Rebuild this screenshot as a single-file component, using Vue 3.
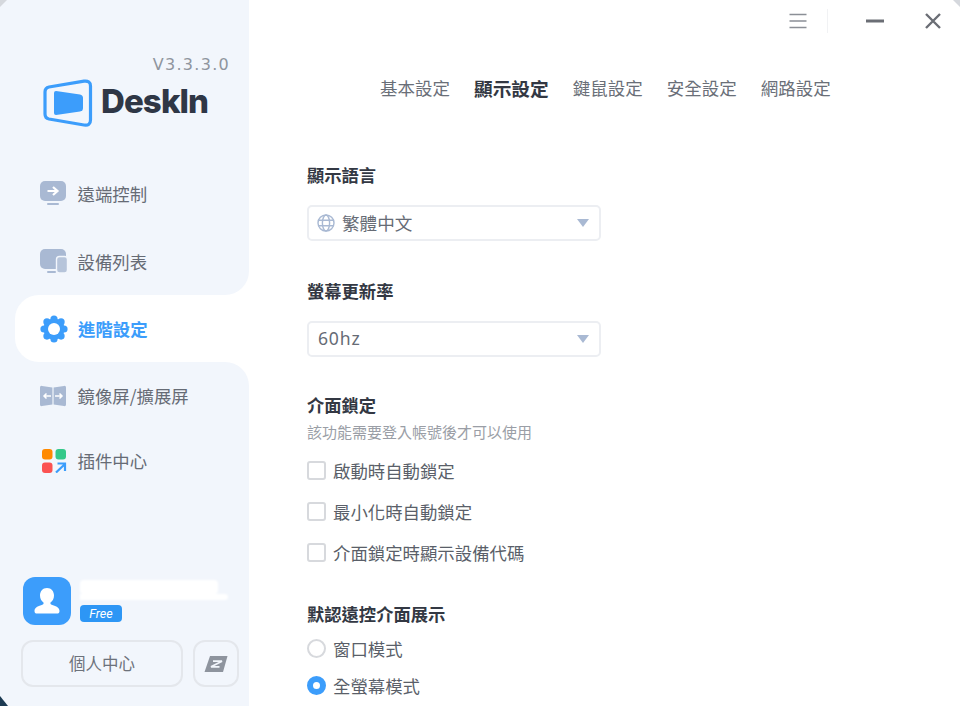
<template>
  <div class="window">
    <aside class="sidebar">
      <div class="side-top">
        <div class="version">V3.3.3.0</div>
        <div class="logo">
          <svg width="52" height="48" viewBox="0 0 52 48">
            <path d="M8 8 L43 2.2 Q49.5 1.5 49.5 7 V41 Q49.5 47 43 46 L8 40 Q4 39.2 4 35 V13 Q4 8.8 8 8 Z" fill="none" stroke="#3c9dfb" stroke-width="3.2" />
            <path d="M15 12 L39 15.5 Q42 16 42 19 V29 Q42 32 39 32.5 L15 36 Q13 36 13 34 V14 Q13 12 15 12 Z" fill="#3c9dfb" />
          </svg>
          <span class="logo-text">DeskIn</span>
        </div>
        <nav class="nav nav-first">
          <div class="nav-item">
            <svg width="28" height="24" viewBox="0 0 28 24">
              <rect x="1" y="0" width="26" height="20" rx="5" fill="#a9b9d3" />
              <rect x="8" y="22" width="12" height="2" rx="1" fill="#a9b9d3" />
              <path d="M8.5 10 H18 M14 6 L18.5 10 L14 14" fill="none" stroke="#fff" stroke-width="2.2" />
            </svg>
            <span>遠端控制</span>
          </div>
          <div class="nav-item">
            <svg width="28" height="24" viewBox="0 0 28 24">
              <rect x="1" y="0" width="26" height="20" rx="5" fill="#a9b9d3" />
              <rect x="8" y="22" width="9" height="2" rx="1" fill="#a9b9d3" />
              <rect x="17.5" y="7.5" width="11" height="16.5" rx="3" fill="#b6c4da" stroke="#f2f6fc" stroke-width="1.4" />
            </svg>
            <span>設備列表</span>
          </div>
        </nav>
      </div>
      <div class="side-mid">
        <div class="nav-item active">
          <svg width="28" height="28" viewBox="0 0 28 28">
            <circle cx="14" cy="14" r="10.5" fill="#3c9dfb" />
            <circle v-for="(t, i) in teeth" :key="i" :cx="t.x" :cy="t.y" r="3.6" fill="#3c9dfb" />
            <circle cx="14" cy="14" r="6" fill="#fff" />
          </svg>
          <span>進階設定</span>
        </div>
      </div>
      <div class="side-bottom">
        <nav class="nav nav-second">
          <div class="nav-item">
            <svg width="28" height="24" viewBox="0 0 28 24">
              <path d="M1 3.5 Q1 1.5 3 1.9 L13.4 3.5 V20.5 L3 22.1 Q1 22.5 1 20.5 Z M14.6 3.5 L25 1.9 Q27 1.5 27 3.5 V20.5 Q27 22.5 25 22.1 L14.6 20.5 Z" fill="#a9b9d3" />
              <path d="M5 12 H12 M7.5 9.5 L5 12 L7.5 14.5 M16 12 H23 M20.5 9.5 L23 12 L20.5 14.5" fill="none" stroke="#fff" stroke-width="1.5" />
            </svg>
            <span>鏡像屏/擴展屏</span>
          </div>
          <div class="nav-item">
            <svg width="28" height="24" viewBox="0 0 28 24">
              <rect x="3" y="0" width="10.5" height="10.5" rx="3" fill="#ff8a00" />
              <rect x="16.5" y="0" width="10.5" height="10.5" rx="3" fill="#35c98a" />
              <rect x="3" y="13.5" width="10.5" height="10.5" rx="3" fill="#fb5252" />
              <path d="M17 23.5 L26 15 M18.5 14.5 H26 V22" fill="none" stroke="#3c9dfb" stroke-width="2.2" />
            </svg>
            <span>插件中心</span>
          </div>
        </nav>
        <div class="user">
          <div class="avatar">
            <svg width="26" height="28" viewBox="0 0 26 28">
              <path d="M13 1 C17.5 1 20 4.5 20 8.5 C20 12 18.5 14 16.5 15.5 C16 17 17 17.5 19 18.2 C23 19.5 25.5 21 25.5 24 C25.5 26 24.5 26.5 23 26.5 H3 C1.5 26.5 0.5 26 0.5 24 C0.5 21 3 19.5 7 18.2 C9 17.5 10 17 9.5 15.5 C7.5 14 6 12 6 8.5 C6 4.5 8.5 1 13 1 Z" fill="#fff" />
            </svg>
          </div>
          <div class="user-info">
            <div class="redact">
              <div class="redact-a"></div>
              <div class="redact-b"></div>
            </div>
            <div class="badge">Free</div>
          </div>
        </div>
        <div class="user-actions">
          <div class="btn-center">個人中心</div>
          <div class="btn-small">
            <svg width="24" height="18" viewBox="0 0 24 18">
              <path d="M6 1 H23.5 L19 17 H0.5 Z" fill="#8e949e" />
              <path d="M9 6.2 H18 L7 11.8 H15.5" fill="none" stroke="#f2f6fc" stroke-width="1.7" />
            </svg>
          </div>
        </div>
      </div>
    </aside>

    <main class="main">
      <div class="titlebar">
        <svg class="menu-icon" width="18" height="16" viewBox="0 0 18 16">
          <path d="M0.5 1.5 H17.5 M0.5 8 H17.5 M0.5 14.5 H17.5" stroke="#8b8f96" stroke-width="1.6" />
        </svg>
        <div class="divider"></div>
        <svg class="min-icon" width="18" height="4" viewBox="0 0 18 4">
          <path d="M0 2 H18" stroke="#6b6e75" stroke-width="3" />
        </svg>
        <svg class="close-icon" width="16" height="16" viewBox="0 0 16 16">
          <path d="M1 1 L15 15 M15 1 L1 15" stroke="#6b6e75" stroke-width="2.4" />
        </svg>
      </div>

      <div class="tabs">
        <span v-for="t in tabs" :key="t" class="tab" :class="{ on: t === '顯示設定' }">{{ t }}</span>
      </div>

      <section class="group group-first">
        <h3>顯示語言</h3>
        <div class="select">
          <svg width="18" height="18" viewBox="0 0 18 18" fill="none" stroke="#a9b9d3" stroke-width="1.4">
            <circle cx="9" cy="9" r="8" />
            <ellipse cx="9" cy="9" rx="3.6" ry="8" />
            <path d="M1.5 6.3 H16.5 M1.5 11.7 H16.5" />
          </svg>
          <span class="select-text">繁體中文</span>
          <i class="caret"></i>
        </div>
      </section>

      <section class="group group-rate">
        <h3>螢幕更新率</h3>
        <div class="select">
          <span class="select-text hz">60hz</span>
          <i class="caret"></i>
        </div>
      </section>

      <section class="group group-lock">
        <h3>介面鎖定</h3>
        <p class="hint">該功能需要登入帳號後才可以使用</p>
        <label v-for="c in checks" :key="c" class="check"><i class="box"></i>{{ c }}</label>
      </section>

      <section class="group group-mode">
        <h3>默認遠控介面展示</h3>
        <label class="radio first"><i class="dot"></i>窗口模式</label>
        <label class="radio"><i class="dot sel"></i>全螢幕模式</label>
      </section>
    </main>

    <i class="corner corner-tl"></i>
    <i class="corner corner-tr"></i>
    <i class="corner corner-bl"></i>
  </div>
</template>

<script setup>
const tabs = ['基本設定', '顯示設定', '鍵鼠設定', '安全設定', '網路設定']
const checks = ['啟動時自動鎖定', '最小化時自動鎖定', '介面鎖定時顯示設備代碼']

// 8 lobes round the cog
const teeth = Array.from({ length: 8 }, (_, i) => {
  const a = (i * Math.PI) / 4
  return { x: 14 + 10 * Math.cos(a), y: 14 + 10 * Math.sin(a) }
})
</script>

<style scoped>
.window {
  position: relative;
  display: flex;
  width: 960px;
  height: 706px;
  overflow: hidden;
  background: #fff;
  font-family: "Noto Sans CJK TC", "Noto Sans", sans-serif;
  color: #5a5f69;
}

.sidebar {
  display: flex;
  flex-direction: column;
  flex: none;
  width: 249px;
  height: 706px;
}

.side-top {
  height: 295px;
  box-sizing: border-box;
  padding-top: 54px;
  background: #f2f6fc;
  border-bottom-right-radius: 24px;
}

.version {
  padding-right: 19px;
  text-align: right;
  font-family: "DejaVu Sans", sans-serif;
  font-size: 16px;
  line-height: 22px;
  letter-spacing: 1.3px;
  color: #8f959e;
}

.logo {
  display: flex;
  align-items: center;
  gap: 8px;
  margin-top: 3px;
  padding-left: 41px;
  height: 48px;
}

.logo-text {
  margin-top: -4px;
  font-family: Inter, sans-serif;
  font-weight: 800;
  font-size: 33px;
  letter-spacing: -0.9px;
  color: #2f3746;
}

.nav-first {
  margin-top: 32px;
}

.nav-item {
  display: flex;
  align-items: center;
  gap: 10.5px;
  height: 68px;
  padding-left: 39px;
  font-size: 17.4px;
  color: #666b75;
}

.side-mid {
  height: 67px;
  background: #f2f6fc;
}

.nav-item.active {
  gap: 10px;
  height: 67px;
  margin-left: 15px;
  padding-left: 25px;
  background: #fff;
  border-radius: 24px 0 0 24px;
  font-weight: 700;
  color: #3c9dfb;
}

.side-bottom {
  flex: 1;
  background: #f2f6fc;
  border-top-right-radius: 24px;
}

.nav-second {
  padding-top: 1px;
}

.nav-second .nav-item {
  height: 65px;
}

.user {
  display: flex;
  gap: 9px;
  margin-top: 84px;
  padding-left: 23px;
}

.avatar {
  display: flex;
  align-items: center;
  justify-content: center;
  width: 48px;
  height: 48px;
  border-radius: 12px;
  background: #3c9dfb;
}

.redact {
  width: 148px;
  height: 20px;
  margin-top: 3px;
  filter: blur(1px);
}

.redact-a {
  width: 138px;
  height: 14px;
  background: #fff;
  border-radius: 4px;
}

.redact-b {
  width: 148px;
  height: 6px;
  background: #fff;
  border-radius: 0 4px 4px 0;
}

.badge {
  width: 42px;
  height: 17px;
  margin-top: 5px;
  border-radius: 4px;
  background: #2d96f5;
  color: #fff;
  text-align: center;
  font-family: Roboto, sans-serif;
  font-style: italic;
  font-size: 12.5px;
  line-height: 17px;
}

.user-actions {
  display: flex;
  gap: 10px;
  margin-top: 15px;
  padding-left: 21px;
}

.btn-center,
.btn-small {
  display: flex;
  align-items: center;
  justify-content: center;
  box-sizing: border-box;
  height: 47px;
  border: 2px solid #e4e7ec;
  border-radius: 12px;
}

.btn-center {
  width: 162px;
  padding-bottom: 2px;
  font-size: 16.5px;
  color: #6d727b;
}

.btn-small {
  width: 46px;
}

.main {
  flex: 1;
  padding-left: 58px;
  min-width: 0;
}

.titlebar {
  display: flex;
  align-items: center;
  height: 42px;
  margin-left: -58px;
}

.menu-icon {
  margin-left: 540px;
}

.divider {
  width: 1px;
  height: 24px;
  margin-left: 20px;
  background: #f1f2f4;
}

.min-icon {
  margin-left: 38px;
}

.close-icon {
  margin-left: 41px;
}

.tabs {
  display: flex;
  align-items: center;
  gap: 24px;
  height: 26px;
  margin-top: 32px;
  margin-left: 73px;
}

.tab {
  font-size: 17.5px;
  color: #6a6f78;
  white-space: nowrap;
}

.tab.on {
  font-size: 18.7px;
  font-weight: 700;
  color: #333843;
}

h3 {
  margin: 0;
  font-size: 17.3px;
  line-height: 26px;
  font-weight: 700;
  color: #333843;
}

.group-first {
  margin-top: 62px;
}

.group-rate {
  margin-top: 37px;
}

.group-lock {
  margin-top: 35px;
}

.group-mode {
  margin-top: 28px;
}

.select {
  display: flex;
  align-items: center;
  box-sizing: border-box;
  width: 294px;
  height: 36px;
  margin-top: 17px;
  padding: 0 10px 0 8px;
  border: 2px solid #eceef2;
  border-radius: 5px;
}

.select-text {
  flex: 1;
  margin-left: 7px;
  margin-top: -2px;
  font-size: 17.6px;
  color: #666b75;
}

.select-text.hz {
  margin-left: 1px;
  font-family: "Noto Sans", sans-serif;
  letter-spacing: 0.8px;
}

.caret {
  width: 0;
  height: 0;
  border-left: 6px solid transparent;
  border-right: 6px solid transparent;
  border-top: 8px solid #a9b9d3;
}

.hint {
  margin: 3px 0 7px;
  font-size: 15px;
  line-height: 22px;
  color: #9a9ea6;
}

.check {
  display: flex;
  align-items: center;
  gap: 7px;
  height: 41px;
  font-size: 17.4px;
  color: #5a5f69;
}

.box {
  box-sizing: border-box;
  width: 19px;
  height: 19px;
  border: 2px solid #d7d9dd;
  border-radius: 3px;
}

.radio {
  display: flex;
  align-items: center;
  gap: 7px;
  height: 37px;
  font-size: 17.4px;
  color: #5a5f69;
}

.radio.first {
  margin-top: 3px;
}

.dot {
  box-sizing: border-box;
  width: 19px;
  height: 19px;
  border: 2px solid #d7d9dd;
  border-radius: 50%;
}

.dot.sel {
  border: 6px solid #3c9dfb;
}

/* bits of desktop showing past the rounded window corners */
.corner {
  position: absolute;
  width: 10px;
  height: 10px;
}

.corner-tl {
  top: 0;
  left: 0;
  background: #d5d8dd;
  clip-path: polygon(0 0, 70% 0, 0 70%);
}

.corner-tr {
  top: 0;
  right: 0;
  background: #d5d8dd;
  clip-path: polygon(30% 0, 100% 0, 100% 70%);
}

.corner-bl {
  bottom: 0;
  left: 0;
  background: #1c3a52;
  clip-path: polygon(0 0, 80% 100%, 0 100%);
}
</style>
